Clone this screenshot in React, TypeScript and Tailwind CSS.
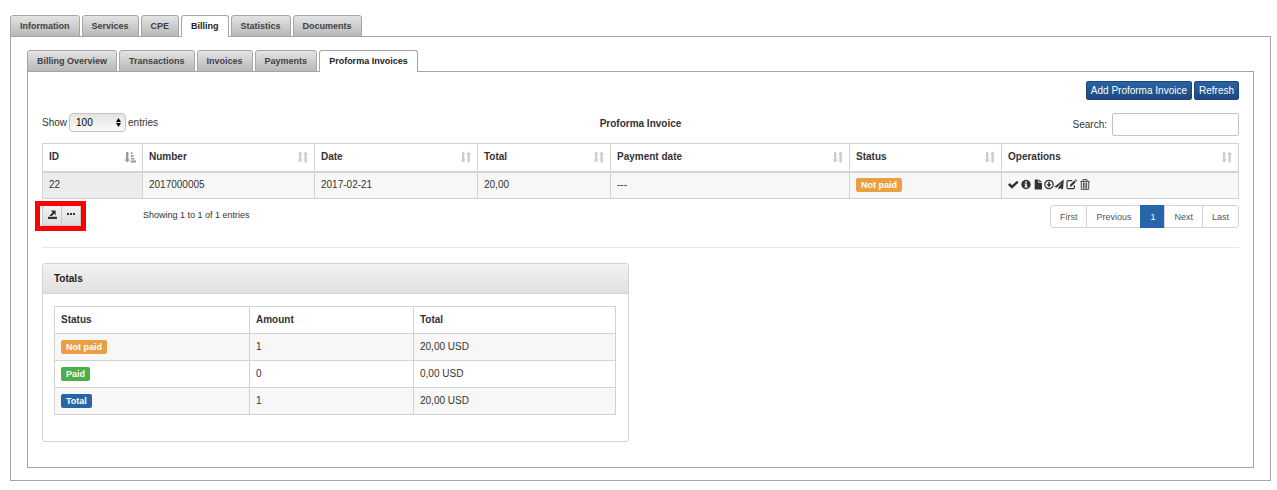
import React from "react";

const mainTabs = ["Information", "Services", "CPE", "Billing", "Statistics", "Documents"];
const subTabs = ["Billing Overview", "Transactions", "Invoices", "Payments", "Proforma Invoices"];

const columns = [
  { name: "ID", width: "w-[100px]" },
  { name: "Number", width: "w-[172px]" },
  { name: "Date", width: "w-[163px]" },
  { name: "Total", width: "w-[133px]" },
  { name: "Payment date", width: "w-[239px]" },
  { name: "Status", width: "w-[152px]" },
  { name: "Operations", width: "w-[237px]" },
];

const totals = [
  { label: "Not paid", color: "bg-[#ec9f41]", amount: "1", total: "20,00 USD" },
  { label: "Paid", color: "bg-[#4cae4c]", amount: "0", total: "0,00 USD" },
  { label: "Total", color: "bg-[#2865a8]", amount: "1", total: "20,00 USD" },
];

const cell = "border border-[#d3d3d3] px-1.5 py-0 text-left align-middle";

function Tabs({ items, active, label }: { items: string[]; active: string; label: string }) {
  return (
    <div role="tablist" aria-label={label} className="relative -mb-px flex gap-0.5">
      {items.map((t) => (
        <button
          key={t}
          type="button"
          role="tab"
          aria-selected={t === active}
          className={
            t === active
              ? "h-[22px] rounded-t-[3px] border border-b-0 border-[#a5a5a5] bg-white px-[9px] pb-px text-[9px] leading-5 font-bold text-[#222]"
              : "h-[22px] rounded-t-[3px] border border-[#a5a5a5] bg-linear-to-b from-[#e4e4e4] to-[#b8b8b8] px-[9px] text-[9px] leading-5 font-bold text-[#3f3f3f]"
          }
        >
          {t}
        </button>
      ))}
    </div>
  );
}

function SortIcon() {
  return (
    <svg width="10" height="12" viewBox="0 0 10 12" fill="#cdcdcd" className="overflow-visible" aria-hidden="true">
      <path d="M1 1h2.400v7.500H5L2.200 11.500-.6 8.500H1zM6.400 11.500h2.400V3.500h1.600L7.600.5 4.800 3.500h1.600z" />
    </svg>
  );
}

function SortedIcon() {
  return (
    <svg width="11" height="12" viewBox="0 0 11 12" fill="#999" className="overflow-visible" aria-hidden="true">
      <path d="M1 1h2.400v7.500H5L2.200 11.500-.6 8.500H1zM6 1h1.500v2H6zM6 4h2.500v2H6zM6 7h3.500v1.500H6zM5.500 9.500H11v2H5.500z" />
    </svg>
  );
}

function Badge({ color, children }: { color: string; children: React.ReactNode }) {
  return (
    <span className={`${color} inline-block h-3.5 rounded-[2px] px-[5px] align-middle text-[9px] leading-[14px] font-bold text-white`}>
      {children}
    </span>
  );
}

const operations = [
  {
    name: "Mark as paid",
    width: "w-[13px]",
    icon: <path d="M.8 5 4 8 9.800 2.600" fill="none" stroke="#333" strokeWidth="2.400" />,
  },
  {
    name: "Details",
    width: "w-[13px]",
    icon: (
      <>
        <circle cx="5" cy="5.500" r="4.700" />
        <path d="M4.200 2.200h1.700v1.500H4.200zM3.500 4.500h2.400v3h.8v1H3.400v-1h.8V5.500h-.7z" fill="#f7f7f7" />
      </>
    ),
  },
  {
    name: "View document",
    width: "w-[10px]",
    icon: <path d="M.7.5h3.700v3.600H8v6.400H.7zM5.200.5 8 3.300H5.200z" />,
  },
  {
    name: "Download",
    width: "w-[10px]",
    icon: (
      <>
        <circle cx="5" cy="5.500" r="4.200" fill="none" stroke="#333" strokeWidth="1.200" />
        <path d="M4.200 2.800h1.600v2.500h1.700L5 8.200 2.500 5.300h1.700z" />
      </>
    ),
  },
  {
    name: "Send",
    width: "w-3",
    icon: <path d="M9.800.500 0 8l3 .5L8.200 3 4.300 8.700v2l1.400-1.500 3.300 1z" />,
  },
  {
    name: "Edit",
    width: "w-3.5",
    icon: (
      <>
        <path d="M6.200 1.600H2.200Q1 1.600 1 2.800v5.700q0 1.200 1.200 1.200h5q1.200 0 1.200-1.200V6.300" fill="none" stroke="#333" strokeWidth="1.200" />
        <path d="m3.700 7.700.5-2L8.300 1.600l1.500 1.500-4.100 4.100zM8.900 1l.7-.7 1.500 1.500-.7.700z" />
      </>
    ),
  },
  {
    name: "Delete",
    width: "w-[10px]",
    icon: (
      <path d="M3 1.800V.6h4v1.200M.3 2.400h9.400M1.300 3v7.300h7.400V3M3.400 3.500v6M5 3.500v6M6.600 3.500v6" fill="none" stroke="#444" strokeWidth="1" />
    ),
  },
];

const primary =
  "h-[19px] rounded-[2px] border border-[#1c4776] bg-linear-to-b from-[#2863a6] to-[#20487a] px-1 text-[10px] leading-4 text-white";
const tool = "flex h-[21px] w-5 items-center justify-center border border-[#c6c6c6] bg-linear-to-b from-[#f2f2f2] to-[#dedede] pb-[3px]";
const page = "-ml-px flex h-[23px] items-center border border-[#d3d3d3] px-[9px]";

export default function App() {
  return (
    <main className="bg-white px-1.5 pt-[15px] pb-[9px] pl-2.5 font-['Liberation_Sans',Arial,sans-serif] text-[10px] leading-3.5 text-[#333]">
      <Tabs items={mainTabs} active="Billing" label="Customer" />
      <section className="border border-[#a5a5a5] px-4 pt-[13px] pb-3">
        <Tabs items={subTabs} active="Proforma Invoices" label="Billing" />
        <div className="border border-[#a5a5a5] px-3.5 pt-[9px] pb-[25px]">
          <div className="flex justify-end gap-0.5">
            <button type="button" className={primary}>Add Proforma Invoice</button>
            <button type="button" className={primary}>Refresh</button>
          </div>

          <div className="mt-[13px] grid grid-cols-3 items-start">
            <label className="flex items-center gap-0.5">
              Show
              <span className="relative flex">
                <select
                  defaultValue="100"
                  className="h-[19px] w-[57px] appearance-none rounded-[4px] border border-[#c4c4c4] bg-linear-to-b from-[#e4e4e4] to-[#fafafa] px-1.5 text-[10px] leading-4 text-black"
                >
                  <option>10</option>
                  <option>25</option>
                  <option>50</option>
                  <option>100</option>
                </select>
                <svg className="pointer-events-none absolute top-[5px] right-[5px]" width="5" height="9" viewBox="0 0 5 9" aria-hidden="true">
                  <path d="M0 4 2.500 0 5 4zM0 5h5L2.500 9z" />
                </svg>
              </span>
              entries
            </label>
            <h2 className="pt-1 text-center font-bold">Proforma Invoice</h2>
            <label className="flex items-center justify-end gap-[5px]">
              Search:
              <input type="search" className="h-[23px] w-[127px] rounded-[2px] border border-[#c4c4c4] bg-white px-1.5" />
            </label>
          </div>

          <table className="mt-[7px] w-full table-fixed border-collapse">
            <thead>
              <tr className="h-7">
                {columns.map((c, i) => (
                  <th key={c.name} className={`${c.width} ${cell} border-b-2`}>
                    <div className="flex items-center justify-between">
                      {c.name}
                      {i === 0 ? <SortedIcon /> : <SortIcon />}
                    </div>
                  </th>
                ))}
              </tr>
            </thead>
            <tbody>
              <tr className="h-[27px] bg-[#f7f7f7]">
                <td className={`${cell} bg-[#ececec]`}>22</td>
                <td className={cell}>2017000005</td>
                <td className={cell}>2017-02-21</td>
                <td className={cell}>20,00</td>
                <td className={cell}>---</td>
                <td className={cell}>
                  <Badge color="bg-[#ec9f41]">Not paid</Badge>
                </td>
                <td className={cell}>
                  <div className="flex items-center pb-0.5">
                    {operations.map((o) => (
                      <button key={o.name} type="button" aria-label={o.name} className={`${o.width} h-[11px]`}>
                        <svg width="11" height="11" viewBox="0 0 11 11" fill="#333" className="max-w-none overflow-visible" aria-hidden="true">
                          {o.icon}
                        </svg>
                      </button>
                    ))}
                  </div>
                </td>
              </tr>
            </tbody>
          </table>

          <div className="mt-1.5 flex items-start text-[9px]">
            <div className="relative flex w-[101px]">
              <button type="button" aria-label="Export" className={tool}>
                <svg width="9" height="9" viewBox="0 0 10 10" fill="#333" aria-hidden="true">
                  <path d="M0 7.500h10V10H0zM3 .5h5.500V6L6.800 4.300 4.300 6.800H1.500L5 2.500z" />
                </svg>
              </button>
              <button type="button" aria-label="More" className={`${tool} -ml-px`}>
                <svg width="8" height="2" viewBox="0 0 8 2" fill="#333" aria-hidden="true">
                  <path d="M0 0h2v2H0zM3 0h2v2H3zM6 0h2v2H6z" />
                </svg>
              </button>
              <div className="pointer-events-none absolute -top-1 -left-[7px] h-[30px] w-[51px] border-[5px] border-[#f00]" />
            </div>
            <p className="pt-[3px]">Showing 1 to 1 of 1 entries</p>
            <nav aria-label="Pages" className="ml-auto flex text-[#555]">
              <a href="#first" className={`${page} rounded-l-[3px]`}>First</a>
              <a href="#previous" className={page}>Previous</a>
              <a href="#1" aria-current="page" className="-ml-px flex h-[23px] items-center bg-[#2865a8] px-2.5 text-white">1</a>
              <a href="#next" className={page}>Next</a>
              <a href="#last" className={`${page} rounded-r-[3px]`}>Last</a>
            </nav>
          </div>

          <hr className="mt-[19px] border-[#e8e8e8]" />

          <section className="mt-[15px] w-[49%] rounded-[3px] border border-[#d3d3d3] text-[10px]">
            <h3 className="h-[30px] border-b border-[#d3d3d3] bg-linear-to-b from-[#f2f2f2] to-[#e0e0e0] px-[11px] leading-[30px] font-bold text-[#222]">
              Totals
            </h3>
            <div className="px-3 pt-3 pb-[26px] pl-[11px]">
              <table className="w-full table-fixed border-collapse">
                <thead>
                  <tr className="h-[27px]">
                    <th className={`w-[195px] ${cell}`}>Status</th>
                    <th className={`w-[164px] ${cell}`}>Amount</th>
                    <th className={`w-[202px] ${cell}`}>Total</th>
                  </tr>
                </thead>
                <tbody>
                  {totals.map((t) => (
                    <tr key={t.label} className="h-[27px] odd:bg-[#f7f7f7]">
                      <td className={cell}>
                        <Badge color={t.color}>{t.label}</Badge>
                      </td>
                      <td className={cell}>{t.amount}</td>
                      <td className={cell}>{t.total}</td>
                    </tr>
                  ))}
                </tbody>
              </table>
            </div>
          </section>
        </div>
      </section>
    </main>
  );
}
